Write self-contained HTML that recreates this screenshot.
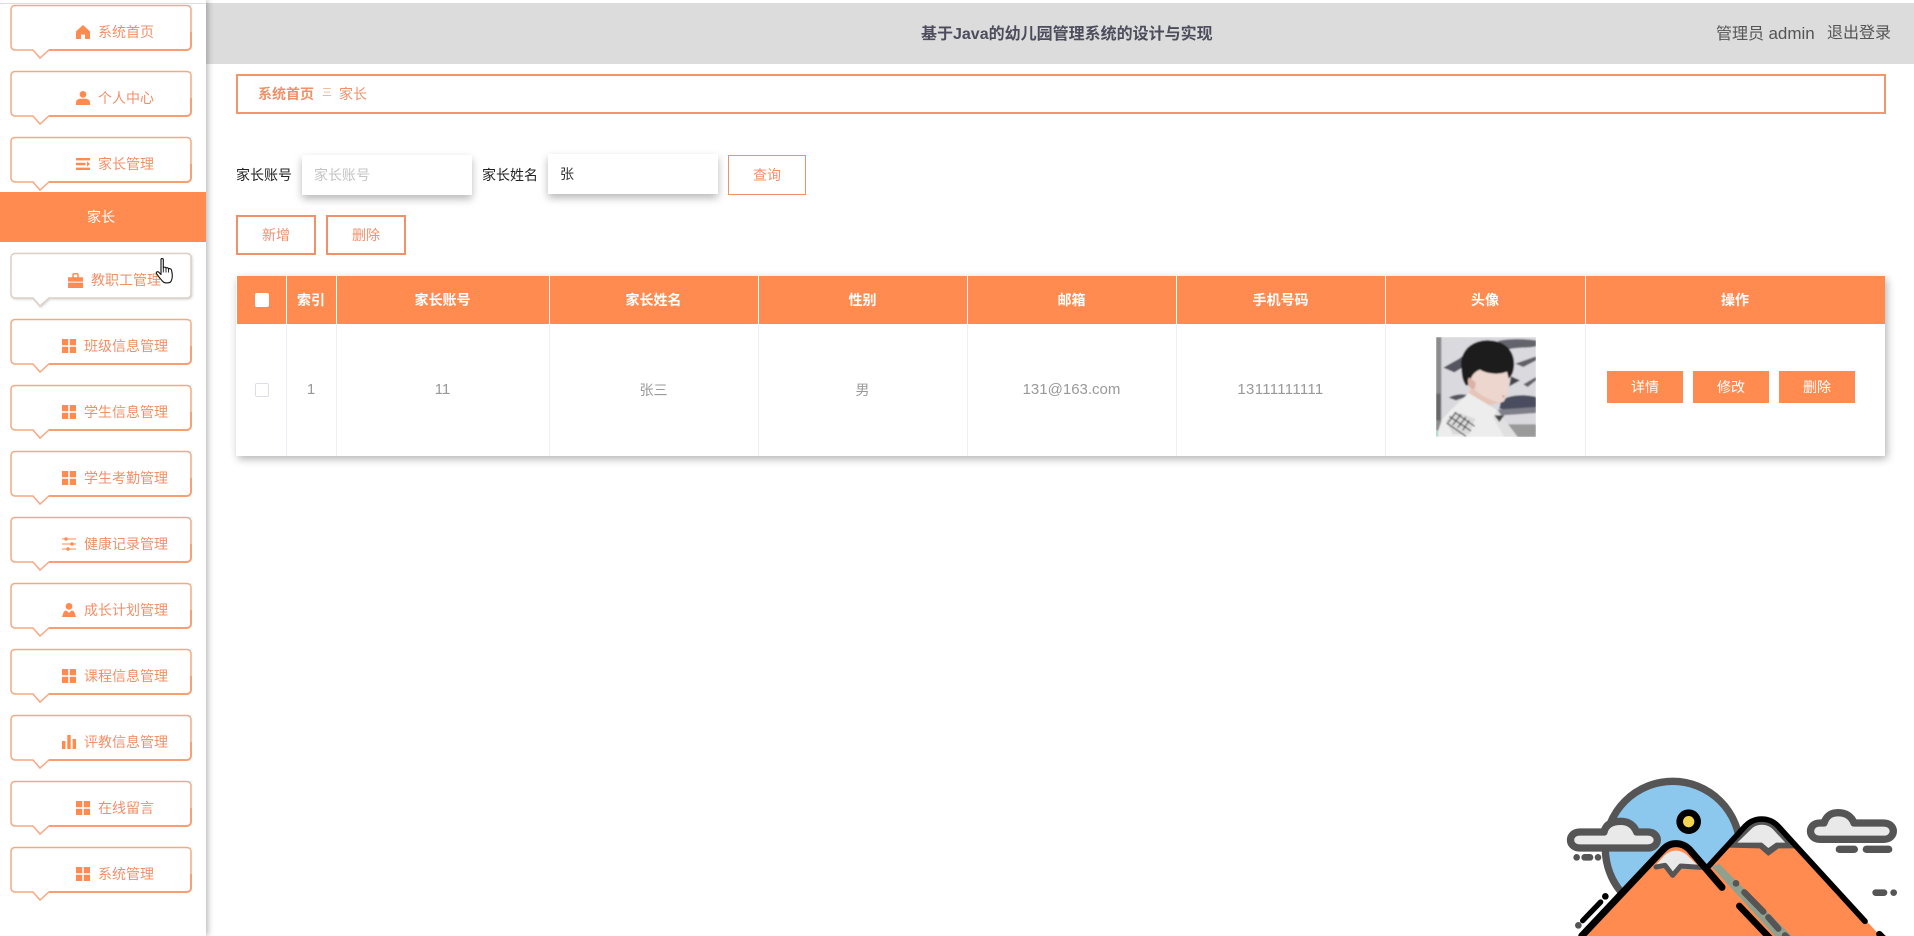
<!DOCTYPE html>
<html lang="zh-CN">
<head>
<meta charset="utf-8">
<title>基于Java的幼儿园管理系统的设计与实现</title>
<style>
html,body{margin:0;padding:0;width:1914px;height:936px;overflow:hidden;background:#fff}
body{position:relative;font-family:"Liberation Sans","Noto Sans CJK SC",sans-serif;font-size:14px;color:#333}
.a{position:absolute}
.t{position:absolute;white-space:nowrap;line-height:20px;height:20px}
.m{color:#f0906a}
.side{left:0;top:0;width:206px;height:936px;background:#fff;box-shadow:2px 0 6px rgba(0,0,0,.28);z-index:3}
.b{position:absolute;left:10px;width:186px;height:58px}
.i{position:absolute;width:14px;height:14px}
.c{position:absolute;text-align:center;white-space:nowrap;line-height:20px;height:20px}
.h{color:#fff;font-weight:bold;top:290px}
.d{color:#999;top:380px}
.v{position:absolute;width:1px}
.btn{position:absolute;box-sizing:border-box;text-align:center;color:#f0906a}
.op{position:absolute;width:76px;height:32px;top:371px;background:#ff8b50;color:#fff;text-align:center;line-height:32px}
.inp{position:absolute;background:#fff;width:170px;height:40px;box-shadow:0 4px 8px rgba(0,0,0,.28);line-height:40px;box-sizing:border-box}
</style>
</head>
<body>
<svg width="0" height="0" style="position:absolute">
<symbol id="bub" viewBox="0 0 186 58">
<path d="M5 1.500H177a4 4 0 0 1 4 3.500V42a4 4 0 0 1-4 4H39L30 54L23 46H5a4 4 0 0 1-4-4V5a4 4 0 0 1 4-3.500z" fill="#fff" stroke="#f6a883" stroke-width="1.500"/>
<path d="M39 46H177a4 4 0 0 0 4-4V28" fill="none" stroke="#f89e72" stroke-width="1.900"/>
</symbol>
<symbol id="grid" viewBox="0 0 14 14"><path fill="#ff8b50" d="M0 0h6.200v6.200H0zM7.800 0H14v6.200H7.800zM0 7.800h6.200V14H0zM7.800 7.800H14V14H7.800z"/></symbol>
<symbol id="home" viewBox="0 0 14 14"><path fill="#ff8b50" d="M7 0L14 6.400V14H9V9.500H5V14H0V6.400z"/></symbol>
<symbol id="user" viewBox="0 0 14 14"><circle cx="7" cy="3.400" r="3.400" fill="#ff8b50"/><path fill="#ff8b50" d="M0 14V11.500C0 9 2.500 7.800 4.500 7.800H9.500C11.500 7.800 14 9 14 11.500V14z"/></symbol>
<symbol id="list" viewBox="0 0 14 14"><path fill="#ff8b50" d="M0 1h14v2.400H0zM0 5.800h9.500v2.400H0zM0 10.600h14V13H0zM11 4.400L14 7l-3 2.600z"/></symbol>
<symbol id="case" viewBox="0 0 14 14"><path fill="#ff8b50" d="M0 4h14v4H0zM0 9h14v5H0zM4 4V1.500C4 .7 4.700 0 5.500 0h3C9.300 0 10 .7 10 1.500V4H8.600V1.400H5.400V4z"/></symbol>
<symbol id="sl" viewBox="0 0 14 14"><path fill="#ff8b50" d="M0 1.500h14v1H0zM0 6.500h14v1H0zM0 11.500h14v1H0z"/><circle cx="4" cy="2" r="1.700" fill="#ff8b50"/><circle cx="10" cy="7" r="1.700" fill="#ff8b50"/><circle cx="6" cy="12" r="1.700" fill="#ff8b50"/></symbol>
<symbol id="per" viewBox="0 0 14 14"><circle cx="7" cy="3.400" r="3.400" fill="#ff8b50"/><path fill="#ff8b50" d="M0 14L1.500 9.500C2 8.200 3.500 7.500 4.500 7.500L7 10L9.500 7.500C10.500 7.500 12 8.200 12.500 9.500L14 14z"/></symbol>
<symbol id="bar" viewBox="0 0 14 14"><path fill="#ff8b50" d="M0 6h3.400v8H0zM5.300 0h3.400v14H5.300zM10.600 4H14v10h-3.400z"/></symbol>
</svg>

<!-- header -->
<div class="a" style="left:0;top:3px;width:206px;height:1px;background:#ddd;z-index:4"></div>
<div class="a" style="left:206px;top:3px;width:1708px;height:61px;background:#dddcdd"></div>
<div class="t" style="left:921px;top:25px;font-size:16px;font-weight:bold;color:#4c4c5c">基于Java的幼儿园管理系统的设计与实现</div>
<div class="t" style="left:1716px;top:24px;font-size:16px;color:#555">管理员 <span style="font-size:17px">admin</span></div>
<div class="t" style="left:1827px;top:24px;font-size:16px;color:#555">退出登录</div>

<!-- sidebar -->
<div class="a side">
<svg class="b" style="top:4px"><use href="#bub"/></svg>
<svg class="i" style="left:76px;top:25px"><use href="#home"/></svg><div class="t m" style="left:98px;top:22px">系统首页</div>
<svg class="b" style="top:70px"><use href="#bub"/></svg>
<svg class="i" style="left:76px;top:91px"><use href="#user"/></svg><div class="t m" style="left:98px;top:88px">个人中心</div>
<svg class="b" style="top:136px"><use href="#bub"/></svg>
<svg class="i" style="left:76px;top:157px"><use href="#list"/></svg><div class="t m" style="left:98px;top:154px">家长管理</div>
<div class="a" style="left:0;top:192px;width:206px;height:50px;background:#ff8b50"></div>
<div class="t" style="left:87px;top:207px;color:#fff">家长</div>

<svg class="b" style="top:252px;filter:drop-shadow(1px 1px 1px rgba(0,0,0,.15))">
<path d="M5 1.500H177a4 4 0 0 1 4 3.500V42a4 4 0 0 1-4 4H39L30 54L23 46H5a4 4 0 0 1-4-4V5a4 4 0 0 1 4-3.500z" fill="#fff" stroke="#dccfc6" stroke-width="1.500"/></svg>
<svg class="i" style="left:68px;top:273px;width:15px;height:15px"><use href="#case"/></svg><div class="t m" style="left:91px;top:270px">教职工管理</div>

<svg class="b" style="top:318px"><use href="#bub"/></svg>
<svg class="i" style="left:62px;top:339px"><use href="#grid"/></svg><div class="t m" style="left:84px;top:336px">班级信息管理</div>
<svg class="b" style="top:384px"><use href="#bub"/></svg>
<svg class="i" style="left:62px;top:405px"><use href="#grid"/></svg><div class="t m" style="left:84px;top:402px">学生信息管理</div>
<svg class="b" style="top:450px"><use href="#bub"/></svg>
<svg class="i" style="left:62px;top:471px"><use href="#grid"/></svg><div class="t m" style="left:84px;top:468px">学生考勤管理</div>
<svg class="b" style="top:516px"><use href="#bub"/></svg>
<svg class="i" style="left:62px;top:537px"><use href="#sl"/></svg><div class="t m" style="left:84px;top:534px">健康记录管理</div>
<svg class="b" style="top:582px"><use href="#bub"/></svg>
<svg class="i" style="left:62px;top:603px"><use href="#per"/></svg><div class="t m" style="left:84px;top:600px">成长计划管理</div>
<svg class="b" style="top:648px"><use href="#bub"/></svg>
<svg class="i" style="left:62px;top:669px"><use href="#grid"/></svg><div class="t m" style="left:84px;top:666px">课程信息管理</div>
<svg class="b" style="top:714px"><use href="#bub"/></svg>
<svg class="i" style="left:62px;top:735px"><use href="#bar"/></svg><div class="t m" style="left:84px;top:732px">评教信息管理</div>
<svg class="b" style="top:780px"><use href="#bub"/></svg>
<svg class="i" style="left:76px;top:801px"><use href="#grid"/></svg><div class="t m" style="left:98px;top:798px">在线留言</div>
<svg class="b" style="top:846px"><use href="#bub"/></svg>
<svg class="i" style="left:76px;top:867px"><use href="#grid"/></svg><div class="t m" style="left:98px;top:864px">系统管理</div>

<!-- cursor -->
<svg class="a" style="left:155px;top:257px" width="20" height="27" viewBox="0 0 20 27">
<path d="M6 2.500C6 1.200 8.300 1.200 8.300 2.500V11C8.800 9.800 10.800 9.800 11 11.200C11.600 10.300 13.300 10.500 13.500 12C14.200 11.200 16.200 11.500 16.500 13.200C17.800 18 17.800 21 16 24.500C14.500 26.300 9.500 26.500 7.800 24.500C6 22.500 3 19 1.500 16.500C.8 15 2.500 14 3.800 15.200L6 17.500z" fill="#fff" stroke="#111" stroke-width="1.100" stroke-linejoin="round"/>
<path d="M8.300 11V15.500M11 11.200V15.500M13.500 12V15.500" stroke="#111" stroke-width=".9" fill="none"/>
</svg>
</div>

<!-- breadcrumb -->
<div class="a" style="left:236px;top:74px;width:1650px;height:40px;box-sizing:border-box;border:2px solid #f2966c"></div>
<div class="t" style="left:258px;top:84px;font-weight:bold;color:#f0906a">系统首页</div>
<div class="t" style="left:322px;top:84px;font-size:10px;color:#e9a98a">三</div>
<div class="t" style="left:339px;top:84px;color:#f0906a">家长</div>

<!-- search -->
<div class="t" style="left:236px;top:165px;color:#222">家长账号</div>
<div class="inp" style="left:302px;top:155px;padding-left:12px;color:#c4c4c4">家长账号</div>
<div class="t" style="left:482px;top:165px;color:#222">家长姓名</div>
<div class="inp" style="left:548px;top:154px;padding-left:12px;color:#333">张</div>
<div class="btn" style="left:728px;top:155px;width:78px;height:40px;border:1px solid #f0906a;line-height:38px">查询</div>
<div class="btn" style="left:236px;top:215px;width:80px;height:40px;border:2px solid #f2906a;line-height:36px">新增</div>
<div class="btn" style="left:326px;top:215px;width:80px;height:40px;border:2px solid #f2906a;line-height:36px">删除</div>

<!-- table -->
<div class="a" style="left:236px;top:276px;width:1649px;height:180px;background:#fff;box-shadow:2px 3px 8px rgba(0,0,0,.3)"></div>
<div class="a" style="left:237px;top:276px;width:1648px;height:48px;background:#ff8b50"></div>
<div class="v" style="left:286px;top:276px;height:48px;background:#fff"></div>
<div class="v" style="left:336px;top:276px;height:48px;background:#fff"></div>
<div class="v" style="left:549px;top:276px;height:48px;background:#fff"></div>
<div class="v" style="left:758px;top:276px;height:48px;background:#fff"></div>
<div class="v" style="left:967px;top:276px;height:48px;background:#fff"></div>
<div class="v" style="left:1176px;top:276px;height:48px;background:#fff"></div>
<div class="v" style="left:1385px;top:276px;height:48px;background:#fff"></div>
<div class="v" style="left:1585px;top:276px;height:48px;background:#fff"></div>
<div class="v" style="left:286px;top:324px;height:132px;background:#ebeef2"></div>
<div class="v" style="left:336px;top:324px;height:132px;background:#ebeef2"></div>
<div class="v" style="left:549px;top:324px;height:132px;background:#ebeef2"></div>
<div class="v" style="left:758px;top:324px;height:132px;background:#ebeef2"></div>
<div class="v" style="left:967px;top:324px;height:132px;background:#ebeef2"></div>
<div class="v" style="left:1176px;top:324px;height:132px;background:#ebeef2"></div>
<div class="v" style="left:1385px;top:324px;height:132px;background:#ebeef2"></div>
<div class="v" style="left:1585px;top:324px;height:132px;background:#ebeef2"></div>

<div class="a" style="left:255px;top:293px;width:14px;height:14px;background:#fff;border-radius:2px"></div>
<div class="c h" style="left:286px;width:50px">索引</div>
<div class="c h" style="left:336px;width:213px">家长账号</div>
<div class="c h" style="left:549px;width:209px">家长姓名</div>
<div class="c h" style="left:758px;width:209px">性别</div>
<div class="c h" style="left:967px;width:209px">邮箱</div>
<div class="c h" style="left:1176px;width:209px">手机号码</div>
<div class="c h" style="left:1385px;width:200px">头像</div>
<div class="c h" style="left:1585px;width:300px">操作</div>

<div class="a" style="left:255px;top:383px;width:14px;height:14px;box-sizing:border-box;background:#fff;border:1px solid #dcdfe6;border-radius:2px"></div>
<div class="c d" style="left:286px;width:50px;font-size:15px">1</div>
<div class="c d" style="left:336px;width:213px;font-size:15px">11</div>
<div class="c d" style="left:549px;width:209px">张三</div>
<div class="c d" style="left:758px;width:209px">男</div>
<div class="c d" style="left:967px;width:209px;font-size:15px">131@163.com</div>
<div class="c d" style="left:1176px;width:209px;font-size:15px;letter-spacing:.3px">13111111111</div>

<!-- avatar -->
<svg class="a" style="left:1436px;top:337px" width="100" height="100" viewBox="0 0 300 300">
<defs><filter id="bl" x="-5%" y="-5%" width="110%" height="110%"><feGaussianBlur stdDeviation="2.500"/></filter><clipPath id="cp"><rect width="300" height="300"/></clipPath></defs>
<g clip-path="url(#cp)"><g filter="url(#bl)">
<rect width="300" height="300" fill="#d9d9de"/>
<rect width="16" height="300" fill="#8b8b8b"/>
<rect x="0" y="170" width="14" height="80" fill="#666"/>
<rect x="180" y="262" width="120" height="38" fill="#9a9a9a"/>
<path d="M185 12C225 4 265 6 300 10V28C270 34 240 30 215 38z" fill="#63636c"/>
<path d="M70 65L110 32L118 72L85 88L55 106L22 92z" fill="#55555e"/>
<path d="M238 80L300 58V70L262 90z" fill="#606068"/>
<path d="M262 142L300 120V130L275 150z" fill="#606068"/>
<path d="M225 118L252 130L220 148z" fill="#44444c"/>
<path d="M38 182C60 170 85 170 100 176L60 190z" fill="#55555e"/>
<path d="M195 190C225 172 270 172 300 180V212C270 222 225 225 190 215z" fill="#4a4e5e"/>
<path d="M185 218L300 210V228L195 235z" fill="#7f7f8a"/>
<path d="M102 115C108 88 130 92 150 98H218C222 130 220 170 203 194C190 200 172 198 150 190L100 170z" fill="#ecd6cd"/>
<path d="M108 150C125 170 150 185 190 198L150 205L98 170z" fill="#e6c4b8"/>
<path d="M198 175L207 177L202 182z" fill="#c08088"/>
<path d="M98 168L184 220L245 300H0L18 248C40 222 70 195 98 168z" fill="#ededed"/>
<path d="M184 220L245 300H205L170 240z" fill="#e0e0e0"/>
<path d="M76 92C70 40 110 8 160 10C210 12 238 45 234 88C232 110 225 118 218 125L213 104C190 115 150 110 132 98C118 103 100 118 104 142L90 146C78 128 78 115 76 92z" fill="#1f1b1f"/>
<path d="M100 122C92 126 95 152 108 156C118 158 120 145 118 135z" fill="#dcb2a6"/>
<path d="M205 235L190 255L175 235z" fill="#444"/>
<path d="M30 252L58 224L118 245L100 292L50 292z" fill="#dadada"/>
<path d="M36 257L60 226M50 264L75 232M65 272L90 240M80 280L100 250M40 238L105 282M32 258L90 298M56 226L116 268" stroke="#444" stroke-width="3.500" fill="none"/>
<rect y="280" width="6" height="20" fill="#9ad8c0"/>
</g></g>
</svg>

<div class="op" style="left:1607px">详情</div>
<div class="op" style="left:1693px">修改</div>
<div class="op" style="left:1779px">删除</div>

<!-- illustration -->
<svg class="a" style="left:1530px;top:760px" width="384" height="176" viewBox="0 0 1152 528">
<circle cx="428" cy="266" r="202" fill="#8cc8ee" stroke="#555" stroke-width="22"/>
<circle cx="476" cy="185" r="37" fill="#000"/><circle cx="476" cy="185" r="17" fill="#f4d64e"/>
<path d="M150 216H222C228 190 250 184 272 184C296 184 312 196 320 216H352C392 216 392 264 352 264H150C112 264 112 216 150 216z" fill="#e9e9ea" stroke="#555" stroke-width="22" stroke-linejoin="round"/>
<rect x="130" y="282" width="20" height="20" rx="10" fill="#555"/><rect x="154" y="282" width="36" height="20" rx="10" fill="#555"/><rect x="194" y="282" width="20" height="20" rx="10" fill="#555"/>
<path d="M870 189H882C890 165 905 158 925 158C948 158 965 170 972 189H1060C1100 189 1100 238 1060 238H870C832 238 832 189 870 189z" fill="#e9e9ea" stroke="#555" stroke-width="22" stroke-linejoin="round"/>
<rect x="917" y="257" width="67" height="22" rx="11" fill="#555"/><rect x="998" y="257" width="89" height="22" rx="11" fill="#555"/>
<rect x="1027" y="388" width="45" height="20" rx="10" fill="#555"/><circle cx="1091" cy="398" r="10" fill="#555"/>

<!-- back mountain -->
<path d="M530 325L640 205C670 172 720 172 750 205L1100 580H560z" fill="#ff8b50"/>
<path d="M545 320L568 312L785 528H735z" fill="#8fa08f"/>
<path d="M590 260L645 205C672 178 718 178 745 205L797 262H745L715 284L690 262z" fill="#555" stroke="#555" stroke-width="6" stroke-linejoin="round"/>
<path d="M622 248L664 207C680 190 710 190 728 207L766 248H738L715 264L696 248z" fill="#e9e9ea"/>
<path d="M530 325L640 205C670 168 720 168 750 205L800 260L1005 484" fill="none" stroke="#000" stroke-width="17" stroke-linecap="round" stroke-linejoin="round"/>
<path d="M1048 522L1062 536" stroke="#000" stroke-width="19" stroke-linecap="round"/>
<circle cx="618" cy="370" r="10" fill="#555"/>
<path d="M643 397L700 455M715 472L745 506M765 526L775 536" stroke="#555" stroke-width="19" stroke-linecap="round"/>

<!-- front mountain -->
<path d="M140 540L400 268C420 245 455 245 478 268L725 540z" fill="#ff8b50"/>
<path d="M398 292C420 265 455 265 478 292L510 322H458L428 340L402 318H375z" fill="#e9e9ea"/>
<path d="M378 321L405 316L428 346L452 318L512 322" fill="none" stroke="#555" stroke-width="15" stroke-linejoin="round" stroke-linecap="round"/>
<path d="M155 528L400 268C420 245 455 245 478 268L576 382" fill="none" stroke="#000" stroke-width="21" stroke-linecap="round" stroke-linejoin="round"/>
<path d="M628 438L725 540" stroke="#000" stroke-width="20" stroke-linecap="round"/>
<path d="M158 482L212 426" stroke="#000" stroke-width="16" stroke-linecap="round"/>
<circle cx="226" cy="409" r="10" fill="#000"/>
<circle cx="145" cy="496" r="10" fill="#555"/>
</svg>
</body>
</html>
